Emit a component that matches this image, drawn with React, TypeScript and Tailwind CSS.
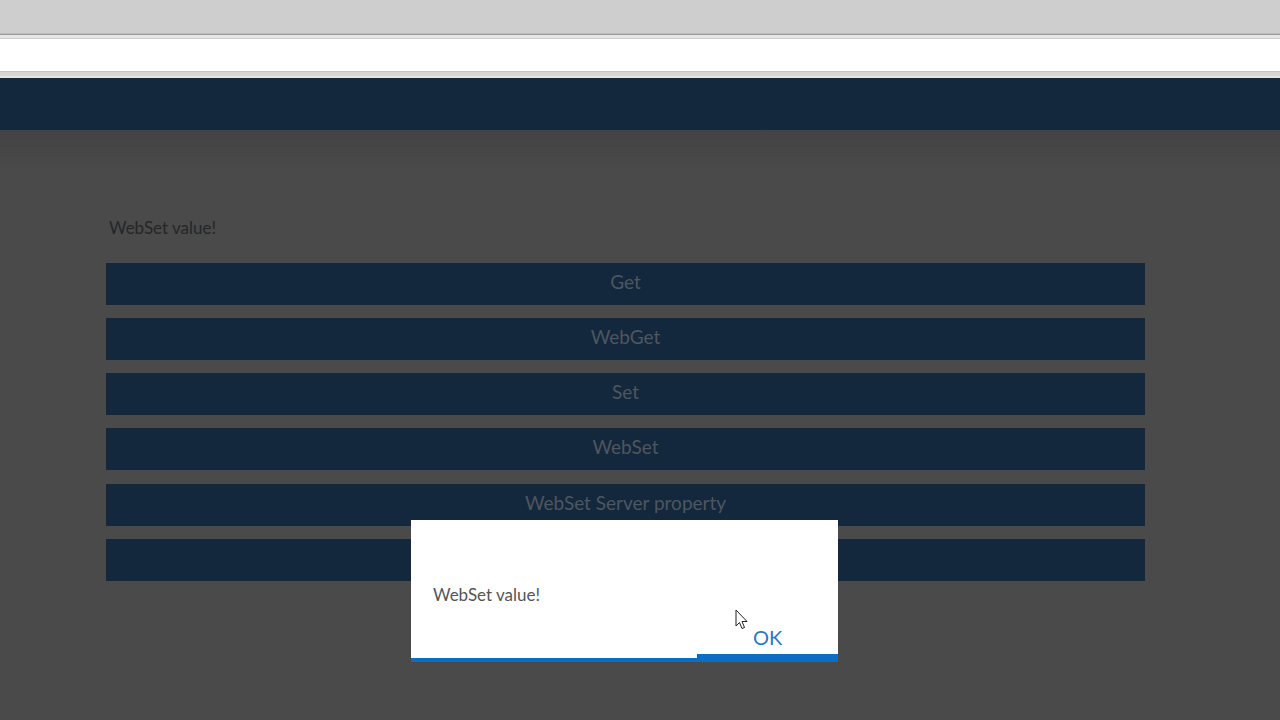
import React from "react";

const buttons = ["Get", "WebGet", "Set", "WebSet", "WebSet Server property", ""];

export default function App() {
  return (
    <div className="relative w-[1280px] h-[720px] overflow-hidden bg-[#4a4a4a]" style={{ fontFamily: "Lato, 'Liberation Sans', sans-serif" }}>
      {/* browser chrome */}
      <div className="h-[34px] bg-[#cecece] border-b border-[#bdbdbd]" />
      <div className="h-px bg-[#9a9a9a]" />
      <div className="h-[4px] bg-[#e6e6e6] border-b border-[#cfcfcf]" />
      <div className="h-[32px] bg-white" />
      <div className="h-[7px] bg-[#d6d6d6] border-t border-[#c4c4c4] border-b-2 border-b-[#e4e4e4]" />
      {/* header */}
      <div className="h-[52px] bg-[#13283c]" />
      <div className="h-[38px] bg-gradient-to-b from-[#434343] to-[#494949]" />
      {/* content */}
      <div className="px-[106px] pt-[50px]">
        <div className="pl-[3px] text-[17px] text-[#262626] leading-[20px]">WebSet value!</div>
        <div className="mt-[25px] flex flex-col gap-[13px] w-[1039px]">
          {buttons.map((b, i) => (
            <div key={i} className={`h-[42px] bg-[#13283c] flex items-center justify-center pb-[3px] text-[19px] text-[#4e5660] ${i === 4 ? "mt-px" : ""}`}>
              {b}
            </div>
          ))}
        </div>
      </div>
      {/* dialog */}
      <div className="absolute left-[411px] top-[520px] w-[427px] h-[142px] bg-white flex flex-col">
        <div className="flex-1 pt-[65px] pl-[22px] text-[17px] text-[#555555] leading-[20px]">WebSet value!</div>
        <div className="flex items-end">
          <div className="flex-1 h-[4px] bg-[#0b6ec6]" />
          <div className="w-[141px] h-[8px] bg-[#0b6ec6] relative">
            <span className="absolute left-[56px] bottom-[13px] text-[20px] leading-[24px] text-[#2a79c2]">OK</span>
          </div>
        </div>
      </div>
      {/* cursor */}
      <svg className="absolute left-[735px] top-[609px]" width="14" height="22" viewBox="0 0 14 22">
        <path d="M1 1 L1 17 L4.5 13.5 L7 19.5 L9.5 18.5 L7 12.5 L12 12.5 Z" fill="white" stroke="#222" strokeWidth="1" strokeLinejoin="round" />
      </svg>
    </div>
  );
}
